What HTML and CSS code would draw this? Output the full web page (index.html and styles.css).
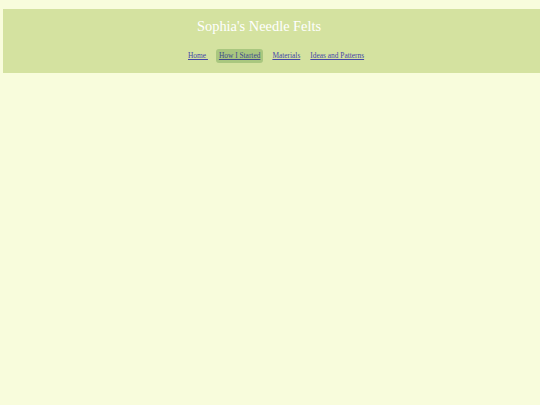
FILE: index.html
```html
<!DOCTYPE html>
<html>
<head>
<meta charset="utf-8">
<link rel="stylesheet" href="styles.css">
</head>
<body>
<header class="site-header">
  <h1 class="title">Sophia's Needle Felts</h1>
  <nav class="nav">
    <a class="nav-link" href="#">Home&nbsp;</a>
    <a class="nav-link active" href="#">How I Started</a>
    <a class="nav-link" href="#">Materials</a>
    <a class="nav-link" href="#">Ideas and Patterns</a>
  </nav>
</header>
</body>
</html>
```
FILE: styles.css
```css
html, body {
  margin: 0;
  padding: 0;
  background: #f8fcdc;
  height: 100%;
}
body {
  padding: 9px 0 0 3px;
  box-sizing: border-box;
  font-family: "Liberation Serif", serif;
}
.site-header {
  background: #d4e2a0;
  height: 64px;
  box-sizing: border-box;
  padding-top: 8px;
}
.title {
  margin: 0;
  padding-left: 194px;
  font-family: "Liberation Serif", serif;
  font-weight: normal;
  font-size: 14.4px;
  line-height: 18px;
  color: #ffffff;
}
.nav {
  display: flex;
  align-items: center;
  margin-top: 14px;
  padding-left: 182px;
  gap: 4px;
}
.nav-link {
  font-size: 7.4px;
  line-height: 14px;
  color: #4548a8;
  padding: 0 3px;
  border-radius: 3px;
}
.nav-link.active {
  background: #a9c77f;
  color: #3d4a8c;
  margin: 0 2px 0 1px;
}
```
